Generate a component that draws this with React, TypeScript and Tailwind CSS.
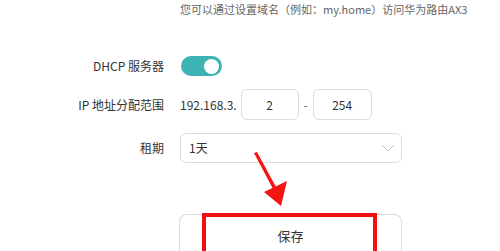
import React from "react";

export default function App() {
  return (
    <div
      className="relative w-[500px] h-[251px] overflow-hidden bg-white text-[#333]"
      style={{ fontFamily: '"Noto Sans CJK SC", "Noto Sans", sans-serif' }}
    >
      <div className="pl-[180px] pt-[2px] text-[11px] leading-[14px] text-[#666] whitespace-nowrap">
        您可以通过设置域名（例如：my.home）访问华为路由AX3
      </div>

      {/* DHCP */}
      <div className="mt-[40px] flex h-[20px] items-center">
        <div className="w-[165px] pr-[1px] text-right text-[12px]">DHCP 服务器</div>
        <div className="ml-[16px] flex h-[20px] w-[41px] items-center justify-end rounded-full bg-[#3db3b5] pr-[3px]">
          <div className="h-[15px] w-[15px] rounded-full bg-white" />
        </div>
      </div>

      {/* IP range */}
      <div className="mt-[13px] flex h-[31px] items-center">
        <div className="w-[165px] pr-[1px] text-right text-[12px]">IP 地址分配范围</div>
        <div className="ml-[15px] flex items-center text-[12px]">
          <span>192.168.3.</span>
          <div className="ml-[4px] flex h-[31px] w-[58px] items-center justify-center rounded-[6px] border border-[#dcdcdc]">
            2
          </div>
          <span className="w-[14px] text-center text-[#666]">-</span>
          <div className="flex h-[31px] w-[59px] items-center justify-center rounded-[6px] border border-[#dcdcdc]">
            254
          </div>
        </div>
      </div>

      {/* Lease */}
      <div className="mt-[13px] flex h-[30px] items-center">
        <div className="w-[165px] pr-[1px] text-right text-[12px]">租期</div>
        <div className="ml-[15px] flex h-[30px] w-[222px] items-center justify-between rounded-[6px] border border-[#dcdcdc] pl-[8px] pr-[6px] text-[12px]">
          <span>1天</span>
          <svg width="14" height="8" viewBox="0 0 14 8" fill="none">
            <path d="M1 1 L7 7 L13 1" stroke="#c4c4c4" strokeWidth="1" />
          </svg>
        </div>
      </div>

      {/* Save button */}
      <div className="mt-[51px] ml-[179px] flex h-[40px] w-[223px] items-start justify-center rounded-t-[8px] border border-b-0 border-[#dcdcdc] pt-[12px] text-[13px] leading-[18px]">
        保存
      </div>

      {/* Annotation: red rectangle */}
      <div className="absolute left-[202px] top-[213px] h-[50px] w-[175px] border-[4px] border-[#f01010]" />

      {/* Annotation: red arrow */}
      <svg className="absolute left-0 top-0" width="500" height="251" viewBox="0 0 500 251">
        <polygon points="254,153 257,152 276,187 273,189" fill="#f41414" />
        <polygon points="264,192 287,181 281,206" fill="#f41414" />
      </svg>
    </div>
  );
}
